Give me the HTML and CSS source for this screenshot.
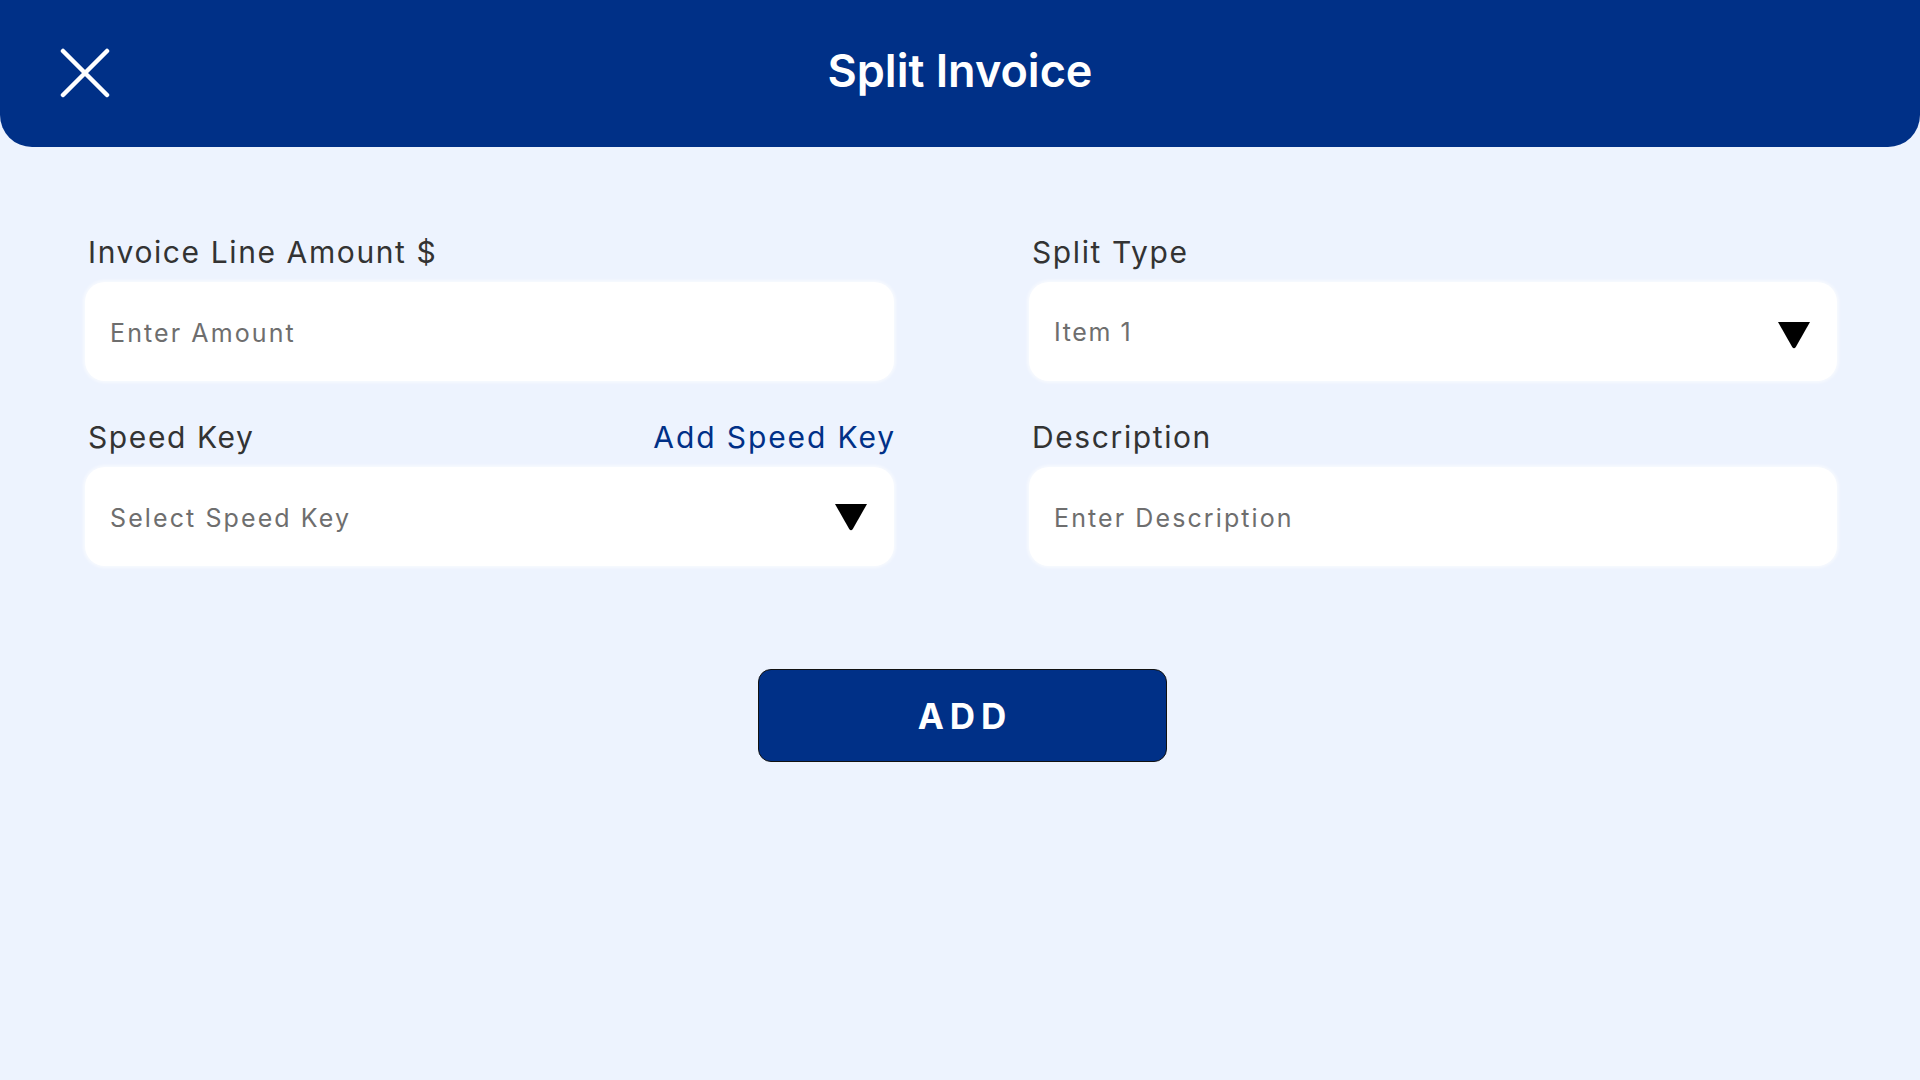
FILE: index.html
```html
<!DOCTYPE html>
<html lang="en">
<head>
<meta charset="utf-8">
<title>Split Invoice</title>
<link rel="stylesheet" href="styles.css">
</head>
<body>
<header class="topbar">
  <div class="topbar-left">
    <svg class="close-icon" width="50" height="50" viewBox="0 0 50 50" aria-label="Close">
      <path d="M3 3 L47 47 M47 3 L3 47" stroke="#ffffff" stroke-width="4.5" stroke-linecap="round" fill="none"/>
    </svg>
  </div>
  <h1 class="title">Split Invoice</h1>
  <div class="topbar-right"></div>
</header>

<main class="form">
  <div class="grid">
    <div class="field">
      <div class="label-row"><span class="label">Invoice Line Amount $</span></div>
      <div class="input"><span class="placeholder">Enter Amount</span></div>
    </div>
    <div class="field">
      <div class="label-row"><span class="label">Split Type</span></div>
      <div class="input select"><span class="value">Item 1</span>
        <svg class="caret caret-low" width="34" height="28" viewBox="0 0 34 28"><path d="M1 1 L33 1 L18.8 26 Q17 28.5 15.2 26 Z" fill="#000"/></svg>
      </div>
    </div>
    <div class="field">
      <div class="label-row"><span class="label">Speed Key</span><span class="link">Add Speed Key</span></div>
      <div class="input select"><span class="placeholder">Select Speed Key</span>
        <svg class="caret" width="34" height="28" viewBox="0 0 34 28"><path d="M1 1 L33 1 L18.8 26 Q17 28.5 15.2 26 Z" fill="#000"/></svg>
      </div>
    </div>
    <div class="field">
      <div class="label-row"><span class="label">Description</span></div>
      <div class="input"><span class="placeholder">Enter Description</span></div>
    </div>
  </div>
  <div class="actions">
    <button class="add-btn">ADD</button>
  </div>
</main>
</body>
</html>
```

FILE: styles.css
```css
* { box-sizing: border-box; }
html, body { margin: 0; padding: 0; }
body {
  width: 1920px;
  height: 1080px;
  background: #edf3fe;
  font-family: "Inter", "Noto Sans", sans-serif;
  overflow: hidden;
}
.topbar {
  height: 147px;
  background: #003087;
  border-radius: 0 0 32px 32px;
  display: grid;
  grid-template-columns: 1fr auto 1fr;
  align-items: center;
}
.topbar-left {
  padding-left: 60px;
  display: flex;
  align-items: center;
  padding-bottom: 2px;
}
.close-icon { display: block; }
.title {
  margin: 0;
  color: #ffffff;
  font-family: "Inter", sans-serif;
  font-weight: 600;
  font-size: 45px;
  line-height: 1;
  padding-bottom: 6px;
  letter-spacing: 0;
}
.form {
  padding: 87px 83px 0 85px;
}
.grid {
  display: grid;
  grid-template-columns: 809px 808px;
  column-gap: 135px;
  row-gap: 38px;
}
.label-row {
  display: flex;
  justify-content: space-between;
  align-items: baseline;
  margin-bottom: 12px;
  padding: 0 0 0 3px;
}
.label {
  font-size: 30px;
  line-height: 36px;
  color: #333333;
  letter-spacing: 1.6px;
}
.link {
  font-size: 30px;
  line-height: 36px;
  color: #003087;
  letter-spacing: 1.9px;
  margin-right: -2px;
}
.input {
  height: 99px;
  background: #ffffff;
  border-radius: 20px;
  box-shadow: 0 0 3px 2px rgba(255, 255, 255, 0.55);
  display: flex;
  align-items: center;
  justify-content: space-between;
  padding: 0 26px 0 25px;
}
.placeholder, .value {
  font-size: 25px;
  color: #6e6e6e;
  letter-spacing: 2.1px;
  padding-top: 3px;
}
.value { padding-top: 0; letter-spacing: 1.6px; }
.caret { display: block; }
.caret-low { margin-top: 7px; }
.actions {
  display: flex;
  justify-content: center;
  padding-top: 103px;
  padding-left: 2px;
}
.add-btn {
  width: 409px;
  height: 93px;
  background: #003087;
  border: 1.5px solid #111111;
  border-radius: 13px;
  color: #ffffff;
  font-family: "Inter", sans-serif;
  font-weight: 700;
  font-size: 35px;
  letter-spacing: 6px;
  text-indent: 6px;
  cursor: pointer;
}
```
